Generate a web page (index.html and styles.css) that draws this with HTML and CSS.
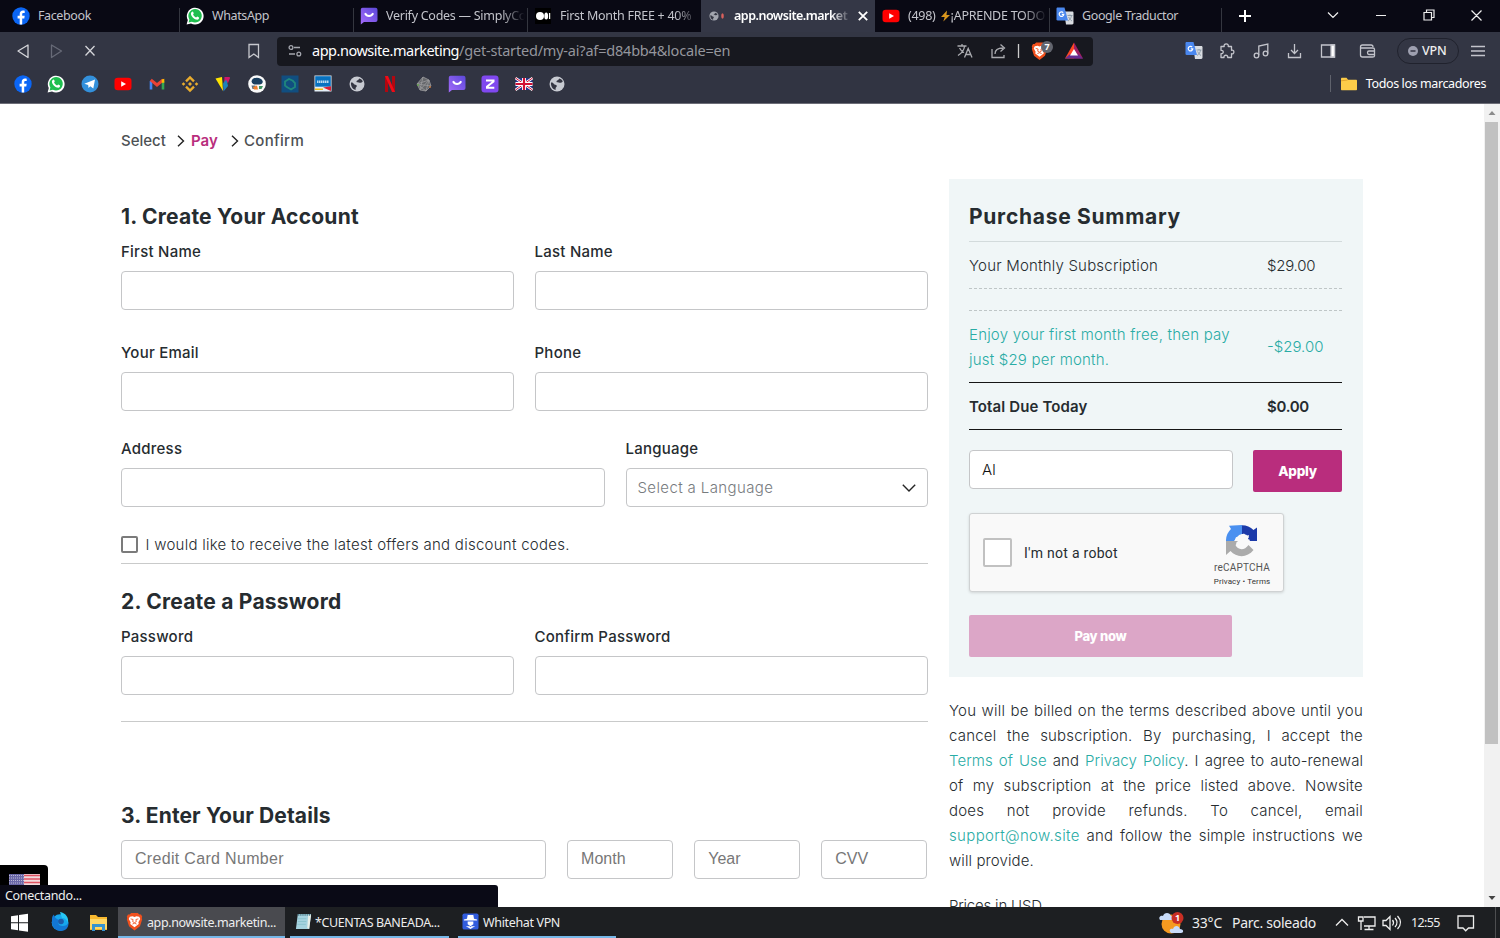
FILE: index.html
```
<!DOCTYPE html>
<html lang="en">
<head>
<meta charset="utf-8">
<title>Get started</title>
<link rel="stylesheet" href="styles.css">
</head>
<body>
<svg class="defs" width="0" height="0" aria-hidden="true">
  <symbol id="facebook" viewBox="0 0 18 18"><circle cx="9" cy="9" r="8.700" fill="#0b66f5"/><path d="M7.700 17.600V11.400H5.600V8.800h2.100V7c0-2.300 1.300-3.500 3.300-3.500.8 0 1.500.1 1.700.2v2.200h-1.300c-1 0-1.200.6-1.200 1.200v1.700h2.500l-.4 2.600h-2.100v6.200z" fill="#fff"/></symbol>
  <symbol id="whatsapp" viewBox="0 0 18 18"><path d="M.6 17.400l1.200-4.300A8.400 8.400 0 1 1 5 16.400z" fill="#fff"/><path d="M2.600 15.400l.8-3A6.700 6.700 0 1 1 5.900 14.700z" fill="#1fbe4f"/><path d="M6.200 4.700c.5-.3.9 0 1 .4l.5 1.200c.1.500-.5.900-.6 1.200.6 1.400 1.700 2.300 3 2.900.4 0 .8-1 1.200-.9l1.700.9c.3.900-.5 2.200-1.700 2.300-2.900 0-6.300-3.400-6.400-6 0-.8.600-1.700 1.300-2z" fill="#fff"/></symbol>
  <linearGradient id="violet" x1="1" x2="0" y1="0" y2="1"><stop stop-color="#5b48d8"/><stop offset="1" stop-color="#a56bfb"/></linearGradient>
  <symbol id="simply" viewBox="0 0 18 18"><path d="M2.500.8h13a2 2 0 0 1 2 2V13a2 2 0 0 1-2 2H4L.8 17.400V2.500A1.700 1.700 0 0 1 2.500.8z" fill="url(#violet)"/><path d="M5 6.200c2 3.700 6 3.700 8.200 0" fill="none" stroke="#fff" stroke-width="2"/></symbol>
  <symbol id="youtube" viewBox="0 0 18 18"><rect x=".5" y="2.800" width="17" height="12.400" rx="3.300" fill="#f00"/><path d="M7.200 6.200v5.600L12 9z" fill="#fff"/></symbol>
  <symbol id="gtranslate" viewBox="0 0 18 18"><path d="M8 4.500h8.200c.8 0 1.300.5 1.300 1.300V16c0 .9-.5 1.400-1.300 1.400H10z" fill="#d9dce1" stroke="none"/><path d="M11.500 8.500h5M14 7.500v1M12 14c2.200-1.300 3.200-3 3.500-5.500M12.700 10c.8 1.700 1.500 3 3.300 4" stroke="#8997a5" stroke-width=".9" fill="none"/><path d="M1.800.5h6.700L12 13.500H1.800A1.300 1.300 0 0 1 .5 12.200V1.800C.5 1 1 .5 1.800.5z" fill="#4a87ee" stroke="none"/><path d="M7.200 5.600a2.300 2.300 0 1 0 .6 1.700H5.800" stroke="#fff" fill="none" stroke-width="1.200"/></symbol>
  <symbol id="globe" viewBox="0 0 18 18"><circle cx="9" cy="9" r="7.500" fill="#c7cad1"/><path d="M3 7.600c2.800-.2 2.200 1.900 4.200 2.100 1.700.2 2.200 1.600.9 2.600-.9.700-.2 1.600-.6 2.700C4.500 14.300 2.600 11.200 3 7.600zM11.300 3.500c1.500.4 2.800 1.400 3.500 2.900-1 .7-1.800 1.700-3.200 1.300-1.200-.4-2.800.2-3.200-1 .1-1.500 2.400-1.300 2.900-3.200z" fill="#343642"/></symbol>
  <symbol id="brave" viewBox="0 0 18 20"><path d="M5.500 1h7l1.700 1.700 1.700-.1 1.300 2.300-.5 1.500.4 1.500-2.300 7.200L9 19.400l-5.800-4.300L.9 7.900l.4-1.500L.8 4.900l1.300-2.300 1.700.1z" fill="#f1501d" stroke="none"/><path d="M4 5l3-.5 2 .7 2-.7 3 .5 1.100 2.300-2 3.400.4 2L9 16.200l-4.500-3.500.4-2-2-3.400z" fill="#fff" stroke="none"/><path d="M4.900 7.200l2.600.7-.4 2.300 1.900 1 1.900-1-.4-2.300 2.600-.7M6.800 12.700L9 11.800l2.200.9" fill="none" stroke="#f1501d" stroke-width=".9"/></symbol>
</svg>

<div class="screen">
<header class="tabs">
  <div class="tab"><svg><use href="#facebook"/></svg><span>Facebook</span></div>
  <div class="tab"><svg><use href="#whatsapp"/></svg><span>WhatsApp</span></div>
  <div class="tab"><svg><use href="#simply"/></svg><span class="fade">Verify Codes — SimplyCo</span></div>
  <div class="tab"><svg viewBox="0 0 18 18"><path d="M1 1h16v16H1z" fill="#000"/><circle cx="6" cy="9" r="4" fill="#fff"/><ellipse cx="12.200" cy="9" rx="1.900" ry="3.600" fill="#fff"/><path d="M15.600 6v6" stroke="#fff" stroke-width="1.300"/></svg><span class="fade">First Month FREE + 40%</span></div>
  <div class="tab active"><svg viewBox="0 0 18 18"><use href="#globe" x="1.500" y="3.500" width="11" height="11" opacity=".75"/><ellipse cx="15.500" cy="9" rx="1.300" ry="2.700" fill="#d9605c"/></svg><span class="fade">app.nowsite.market</span><svg class="close" viewBox="0 0 10 10"><path d="M1.500 1.500l7 7m0-7l-7 7" stroke="#fff" stroke-width="1.500"/></svg></div>
  <div class="tab"><svg><use href="#youtube"/></svg><span class="fade">(498) <svg class="bolt" viewBox="0 0 10 14"><path d="M6.500 1.500L.5 8h3.700L2.800 12.500 9.500 6H6z" fill="#d9961d"/></svg>¡APRENDE TODO</span></div>
  <div class="tab"><svg><use href="#gtranslate"/></svg><span>Google Traductor</span></div>
  <div class="tab-end"></div>
  <svg class="window-controls" viewBox="0 0 278 32" fill="none" stroke="#eee" stroke-width="1.200"><path d="M23 10v12M17 16h12" stroke="#fff" stroke-width="2"/><path d="M106 12.500l5 5 5-5M154 15.500h10M202 12.500h7.500v7.500H202zM204.500 12V10h7.500v7.500h-2M249.500 10.500l10 10m0-10l-10 10"/></svg>
</header>

<div class="toolbar">
  <svg class="nav" viewBox="0 0 277 38" fill="none" stroke-width="1.300"><path d="M28 13v12.500L18 19z" stroke="#d5d6da" stroke-linejoin="round"/><path d="M51.500 13v12.500L61.500 19z" stroke="#676a77" stroke-linejoin="round"/><path d="M85.500 14l9 9.500m0-9.500l-9 9.500" stroke="#d5d6da"/><path d="M249 12.500h9.500V25.500l-4.700-3.500-4.800 3.500z" stroke="#c7c8ce"/></svg>
  <div class="url">
    <svg class="tune" viewBox="0 0 14 14" fill="none" stroke="#a5a7af" stroke-width="1.300"><circle cx="3" cy="3.500" r="1.900"/><path d="M6 3.500h6M1 10h6"/><circle cx="10.800" cy="10" r="1.900"/></svg>
    <span class="host">app.nowsite.marketing</span><span class="path">/get-started/my-ai?af=d84bb4&amp;locale=en</span>
    <svg class="url-icons" viewBox="0 0 140 30" fill="none" stroke="#aaabb0" stroke-width="1.300"><path d="M5.500 10h9M10 8v2M6 19.500c4-2.500 6-5 6.500-9M7.500 12c1 2 2.500 3.500 4.500 4.500M12.500 21.500l3.700-9 3.800 9M14 18.500h4.500M40 13v8.500h12V19M43 18c0-4 2-6 8-6M48.500 8.500l4 3.500-4 3.500"/><path d="M66.500 8v14" stroke="#ccc"/><use href="#brave" x="79" y="5.500" width="17" height="19"/><circle cx="95" cy="11" r="6" fill="#62656e" stroke="none"/><text x="92.600" y="14.300" class="tiny">7</text><path d="M122 6.500l-9 16h9z" fill="#ff4724" stroke="none"/><path d="M122 6.500l9 16h-9z" fill="#9e1f63" stroke="none"/><path d="M113 22.500h18l-4.500-4h-9z" fill="#662d91" stroke="none"/><path d="M122 13l-4 6.500h8z" fill="#fff" stroke="none"/></svg>
  </div>
  <svg class="tools" viewBox="0 0 316 38" fill="none" stroke="#c3c4cb" stroke-width="1.300"><use href="#gtranslate" x="1" y="9.500" width="18" height="18"/><path d="M37 14.500h3.200c-1-3.500 5-3.500 4 0h3.300v3.800c3.200-.8 3.200 4.200 0 3.400v3.800h-3.800c.5-3-4.200-3-3.700 0h-3v-3.800c3 .3 3-3.700 0-3.400z" stroke-linejoin="round"/><circle cx="72.500" cy="23.500" r="2.300"/><circle cx="81.500" cy="21.500" r="2.300"/><path d="M74.800 23V14l9-2v9.500M104.500 21v4.500h12V21M110.500 12v9M107 18l3.500 3.500L114 18M137.500 13h13v12h-13z"/><path d="M147 13h3.500v12H147z" fill="#fff"/><path d="M188.500 25h-10c-1 0-2-1-2-2v-8c0-1 1-2 2-2H187c1 0 2 1 2 2M177 16h12c1 0 1.500.5 1.500 1.500V24c0 1-1 1-2 1M190 19h-5c-2 0-2 3.500 0 3.500h5"/><rect x="213.500" y="6.500" width="61" height="25" rx="12.500" stroke="#20222d" stroke-width="1"/><circle cx="229" cy="19" r="5" fill="#9ea0b0" stroke="none"/><path d="M226.500 19h5" stroke="#333543" stroke-width="1.500"/><path d="M287 14.500h14M287 19h14M287 23.500h14" stroke-width="1.500"/><text x="238" y="23" class="vpn">VPN</text></svg>
</div>

<div class="bookmarks">
  <svg><use href="#facebook"/></svg><svg><use href="#whatsapp"/></svg>
  <svg viewBox="0 0 18 18"><circle cx="9" cy="9" r="8.500" fill="#3390db"/><path d="M3.300 8.800L14 4.500l-1.700 9-3-2.200-1.800 1.600-.3-2.800z" fill="#fff"/></svg>
  <svg><use href="#youtube"/></svg>
  <svg viewBox="0 0 18 18"><path d="M3 14.500V6" stroke="#4285f4" stroke-width="2.600"/><path d="M15 14.500V6" stroke="#34a853" stroke-width="2.600"/><path d="M2.800 4.800L9 10l6.200-5.200" fill="none" stroke="#e94235" stroke-width="3"/><path d="M13.700 6.300V4.500l2.600-.8v4h-2.600" fill="#fbbc04"/></svg>
  <svg viewBox="0 0 18 18" fill="none" stroke="#e9ac2e" stroke-width="2.300"><path d="M5 6.400l4-4 4 4M5 11.600l4 4 4-4"/><path d="M9 7l2 2-2 2-2-2zM.7 9L2.500 7.200 4.300 9l-1.800 1.800zM13.700 9l1.800-1.800L17.300 9l-1.800 1.800z" fill="#e9ac2e" stroke="none"/></svg>
  <svg viewBox="0 0 18 18"><path d="M1.500 3.500L8 2l1 14z" fill="#ffe500"/><path d="M10.500 2h5.500L9.500 16z" fill="#cc176b"/><path d="M12.500 4L14 11l-4.500 5.500-.5-8z" fill="#1d82b9"/><path d="M11 3h5l-2 5z" fill="#cc176b"/></svg>
  <svg viewBox="0 0 18 18"><circle cx="9" cy="9" r="8.800" fill="#f9f9f9"/><path d="M3.500 6.500c.5-5 10-5 11.300 0 0 2-2 3.500-4 3H8c-2 0-4-.5-4.500-3z" fill="#193e5f"/><path d="M3.500 10.500h4v3.500h-3z" fill="#5d7180"/><path d="M5 12l4-1.500 1 4H6z" fill="#f0802c"/><path d="M11 11h4l-1.500 3H11z" fill="#3d9560"/></svg>
  <svg viewBox="0 0 18 18"><path d="M.5.500h17v17H.5z" fill="#114e80"/><path d="M6.500 12.500L4 10.500V6.500l4-2.500 4.500 2M11.500 5.500L14 8v4l-4 2.500-5-3" fill="none" stroke="#21877c" stroke-width="1.800"/></svg>
  <svg viewBox="0 0 18 18"><path d="M.5.500h17v16H.5z" fill="#e4eff7"/><path d="M1.200 1.200h15.600v10.500H1.200z" fill="#0872c0"/><path d="M3 6.700h12" stroke="#b9d9ee" stroke-width="2.500" stroke-dasharray="1.500 .5"/><path d="M1 13.500h8v1.500H1z" fill="#f0bd19"/><path d="M9 12.500l8-1.200V16z" fill="#d82135"/></svg>
  <svg><use href="#globe"/></svg>
  <svg viewBox="0 0 18 18"><path d="M4 1h3v16H4zM11 1h3v16h-3z" fill="#b20710"/><path d="M4 1h3l7 16h-3z" fill="#ef0c18"/></svg>
  <svg viewBox="0 0 18 18" fill="#66686c" stroke="#9a9b9d" stroke-width=".8"><path d="M8 2l6 3 2 6-5 5-6-1-3-6z"/><path d="M2 9l14 2M8 2l-3 13M14 5L5 15M2 9l12-4-3 11z" fill="none"/><circle cx="3" cy="10" r="1" fill="#62a04d" stroke="none"/><circle cx="15" cy="12" r="1" fill="#be723e" stroke="none"/></svg>
  <svg><use href="#simply"/></svg>
  <svg viewBox="0 0 18 18"><rect x=".5" y=".5" width="17" height="17" rx="3" fill="#8048ef"/><path d="M5 5.500h7.500v1L5.500 12M5 12.700h8.300" fill="none" stroke="#fff" stroke-width="2"/></svg>
  <svg viewBox="0 0 18 18"><path d="M.5 3h17v12H.5z" fill="#26348b"/><path d="M.5 3l17 12M17.500 3L.5 15" stroke="#fff" stroke-width="2.500"/><path d="M.5 3l17 12M17.500 3L.5 15" stroke="#d21034"/><path d="M9 3v12M.5 9h17" stroke="#fff" stroke-width="4"/><path d="M9 3v12M.5 9h17" stroke="#d21034" stroke-width="2.200"/></svg>
  <svg><use href="#globe"/></svg>
  <div class="all-bookmarks"><svg viewBox="0 0 18 18"><path d="M1 4c0-1 .4-1.300 1-1.300h4.500l1.500 2h8c.6 0 1 .4 1 1v8.600c0 .6-.4 1-1 1H2c-.6 0-1-.4-1-1z" fill="#fccc49"/><path d="M1 5.800l6.500-.8" stroke="#e2a52b"/></svg><span>Todos los marcadores</span></div>
</div>

<div class="viewport">
  <main class="checkout">
    <nav class="steps"><span class="s1">Select</span><svg viewBox="0 0 8 12"><path d="M1 .8L6.500 6 1 11.200"/></svg><b>Pay</b><svg class="second" viewBox="0 0 8 12"><path d="M1 .8L6.500 6 1 11.200"/></svg><span class="s2">Confirm</span></nav>
    <div class="columns">
      <form class="form">
        <h2>1. Create Your Account</h2>
        <div class="pair first"><label>First Name<i class="field"></i></label><label>Last Name<i class="field"></i></label></div>
        <div class="pair second-row"><label>Your Email<i class="field"></i></label><label>Phone<i class="field"></i></label></div>
        <div class="pair address"><label>Address<i class="field"></i></label><label>Language<i class="field select"><span>Select a Language</span><svg viewBox="0 0 14 8"><path d="M.8.800L7 7 13.200.8"/></svg></i></label></div>
        <div class="offers"><i></i><span>I would like to receive the latest offers and discount codes.</span></div>
        <h2 class="h-password">2. Create a Password</h2>
        <div class="pair passwords"><label>Password<i class="field"></i></label><label>Confirm Password<i class="field"></i></label></div>
        <h2 class="h-details">3. Enter Your Details</h2>
        <div class="card-row"><i class="field"><span class="cc">Credit Card Number</span></i><i class="field">Month</i><i class="field">Year</i><i class="field">CVV</i></div>
      </form>
      <aside>
        <section class="summary">
          <h2>Purchase Summary</h2>
          <div class="line sub"><span>Your Monthly Subscription</span><em>$29.00</em></div>
          <div class="gap"></div>
          <div class="line promo"><span>Enjoy your first month free, then pay<br>just $29 per month.</span><em>-$29.00</em></div>
          <div class="line total"><span>Total Due Today</span><em>$0.00</em></div>
          <div class="coupon"><div class="field">AI</div><div class="apply">Apply</div></div>
          <div class="captcha"><i class="box"></i><span>I'm not a robot</span>
            <div class="brand"><svg viewBox="0 0 32 32"><path d="M16 0v9a7 7 0 0 0-5 3L8 16H0A16 16 0 0 1 5 4L3 .7z" fill="#4a90f0"/><path d="M16 .2A16 16 0 0 1 27.500 5L31 2.500V16H19l4-4a8 8 0 0 0-7-3z" fill="#1c3aa9"/><path d="M0 16h13l-3.500 4c2 5 9 6 13 0l5 5c-6 8-17 8-23 1L0 30z" fill="#ababab"/><path d="M15 10l3-1.500 2 2.500 3-1-1 4 2 1-2 4-4-2-2 4-4 1-2-4 2-2-3-1 1-3 4 1z" fill="#f9f9f9"/></svg><b>reCAPTCHA</b><small>Privacy&nbsp;•&nbsp;Terms</small></div>
          </div>
          <div class="pay">Pay now</div>
        </section>
        <div class="terms"><p>You will be billed on the terms described above until you</p><p>cancel the subscription. By purchasing, I accept the</p><p class="links"><a>Terms of Use</a> and <a>Privacy Policy</a>. I agree to auto-renewal</p><p>of my subscription at the price listed above. Nowsite</p><p>does not provide refunds. To cancel, email</p><p><a class="mail">support@now.site</a> and follow the simple instructions we</p><p class="last">will provide.</p><p class="last currency">Prices in USD</p></div>
      </aside>
    </div>
  </main>
  <div class="scrollbar"><svg viewBox="0 0 16 18"><path d="M4.500 11L8 7l3.500 4z" fill="#8b8b8b"/></svg><i></i><svg class="down" viewBox="0 0 16 18"><path d="M4.500 7L8 11l3.500-4z" fill="#444"/></svg></div>
  <div class="flag"><svg viewBox="0 0 31 12"><path d="M0 0h31v12H0z" fill="#f1dadd"/><path d="M0 1.500h31M0 5h31M0 8.500h31M0 12h31" stroke="#df5262" stroke-width="1.700"/><path d="M0 0h15v12H0z" fill="#6a68a8"/><path d="M0 1.500h15M0 4h15M0 6.500h15M0 9h15" stroke="#bbb8d5" stroke-dasharray="1 1"/></svg></div>
  <div class="status">Conectando...</div>
</div>

<footer class="taskbar">
  <svg class="launch" viewBox="0 0 118 31"><path d="M11 9.200l7-1v7h-7zM19 8l9-1.300v8.500h-9zM11 16.200h7v7l-7-1zM19 16.200h9v8.500l-9-1.300z" fill="#fff"/><circle cx="60" cy="15.500" r="8.300" fill="#16a7ee"/><path d="M52 13c-1 8 5 11 9 11 5 0 8-4 7.500-9-1 3-3 4-6 4-4 0-5-3-3.500-6-3-1-5-3-5-5.500C52 9 52 11 52 13z" fill="#1377d4"/><path d="M60 5c6 1 9 6 8 11-1-3-3-5-6-5z" fill="#27c6f5"/><circle cx="61" cy="14.500" r="2.800" fill="#1d5aaa"/><path d="M90 8h6l2 2h9v13H90z" fill="#f8b92f"/><path d="M90 12h17v10H90z" fill="#ffd867"/><path d="M92 17h13v7h-3v-4h-7v4h-3z" fill="#3794d1"/></svg>
  <div class="task current"><svg viewBox="0 0 18 20"><use href="#brave"/></svg><span>app.nowsite.marketin...</span></div>
  <div class="task notes"><svg viewBox="0 0 18 20"><path d="M3 2h14l-2 16H1z" fill="#a6d3df"/><path d="M14 3h3l-2 15-2-1z" fill="#e9efe8"/><path d="M3 3h13" stroke="#44727f" stroke-width="2" stroke-dasharray="1 1"/><path d="M3 7h9M3 10h9M2.500 13h9" stroke="#8bc3ce"/></svg><span>*CUENTAS BANEADA...</span></div>
  <div class="task white"><svg viewBox="0 0 18 20"><rect x=".5" y="1.500" width="17" height="17" rx="2" fill="#315cdd"/><path d="M6 3h6l.7 4 3.300 1v1H2V8l3.300-1zM6 10h6v3l-3 2-3-2zM4 15h4l1 1 1-1h4l-3 1.500-2 1.500-2-1.500z" fill="#fff"/></svg><span>Whitehat VPN</span></div>
  <div class="tray">
    <svg class="weather" viewBox="0 0 26 24"><circle cx="13" cy="13" r="9.500" fill="#f59a20"/><path d="M2 9c-2-3 1-5 3-4 1-4 7-4 8 0 3 0 3 4 0 4zM13 22c-3-3 0-5 2-4 1-4 6-4 7 0 4 0 4 4 1 4z" fill="#c9dcfa"/><circle cx="19.500" cy="7" r="6" fill="#c92f24"/><text x="17" y="10.300" class="tiny">1</text></svg>
    <span class="temp">33°C</span><span class="sky">Parc. soleado</span>
    <svg class="sys" viewBox="0 0 74 31" fill="none" stroke="#eee" stroke-width="1.300"><path d="M5 18.500l6-6 6 6M33 10h11v9H33M38 19v3.500M33.500 22.500h9M27.500 10h4.500v4h-4.500zM30 14v9M52 13.500h3l4-4v13l-4-4h-3zM61.500 13q2 2.500 0 5.500M64 11q4 4.500 0 9M66.500 9q6 6.500 0 13"/></svg>
    <span class="clock">12:55</span>
    <svg class="notif" viewBox="0 0 18 18" fill="none" stroke="#eee" stroke-width="1.300"><path d="M1 2h15.500v12H11.500L8.700 16.800 6 14H1z"/></svg>
  </div>
</footer>
</div>
</body>
</html>
```
FILE: styles.css
```
*{box-sizing:border-box}
body{margin:0;overflow:hidden;background:#fff;font-family:Inter,sans-serif;color:#262c30}
i,em{font-style:normal}
svg{display:block;flex:none}
.defs{position:absolute}
.screen{width:1500px;height:938px;display:flex;flex-direction:column}
.tabs,.toolbar,.bookmarks,.status,.taskbar{font-family:"Noto Sans",sans-serif;font-size:12.500px;letter-spacing:-.39px;white-space:pre}

.tabs{height:32px;flex:none;background:#090914;display:flex;padding-left:5px;color:#c3c4cb}
.tab{width:174px;display:flex;align-items:center;gap:8px;padding:0 0 1px 7px;background:linear-gradient(#34363f,#34363f) 0 100%/1px 24px no-repeat}
.tab:first-child,.tab.active,.tab.active + .tab{background-image:none}
.tab > svg{width:18px;height:18px}
.tab .fade{width:139px;display:flex;letter-spacing:-.27px;-webkit-mask-image:linear-gradient(90deg,#000 83%,transparent);mask-image:linear-gradient(90deg,#000 83%,transparent)}
.tab.active{margin-left:-4px;width:178px;padding-left:10px;background:linear-gradient(#343746,#343746) 4px 0/174px 32px no-repeat;color:#fff}
.tab.active .fade{width:117px;font-weight:600;letter-spacing:-.5px;margin-left:1px}
.tab .close{width:12px;height:12px;margin-left:-2px}
.bolt{width:11px;height:14px;margin:2px 0 0 1px}
.tab-end{width:1px;height:24px;margin:8px 0 0 -2px;background:#34363f}
.window-controls{width:278px;height:32px}

.toolbar{height:38px;flex:none;display:flex;align-items:center;background:#333644}
.nav{width:277px;height:38px}
.url{width:816px;height:29px;background:#17181f;border-radius:4px;display:flex;align-items:center;padding-left:11px;font-size:14.500px}
.tune{width:14px;height:14px;margin-right:10px}
.host,.path{padding-bottom:2px}
.host{width:147px;color:#fff;letter-spacing:-.48px}
.path{width:271px;color:#95969d;letter-spacing:-.2px;margin-right:222px}
.url-icons{width:140px;height:30px}
.tools{width:316px;height:38px;margin-left:91px}
.tiny{font:700 9px "Noto Sans",sans-serif;fill:#fff;stroke:none}
.vpn{font:500 12.500px "Noto Sans",sans-serif;letter-spacing:-.2px;fill:#eee;stroke:none}

.bookmarks{height:34px;flex:none;display:flex;align-items:center;gap:15.380px;padding:0 14px 6px;background:#313442;border-bottom:1px solid #6c6d77}
.bookmarks svg{width:18px;height:18px}
.all-bookmarks{margin-left:auto;height:17px;border-left:1px solid #5f626c;padding-left:9px;display:flex;align-items:center;gap:8px;color:#fff}

.viewport{height:803px;flex:none;position:relative;display:flex;overflow:hidden}
.checkout{flex:1;padding:24px 0 0 121px}
.steps{height:25px;display:flex;align-items:center;font-size:15px;font-weight:500;color:#4d5154}
.steps svg{width:8px;height:12px;margin:0 6px 0 11px;fill:none;stroke:#222;stroke-width:1.400}
.steps .second{margin:0 5px 0 12px}
.steps b{font-weight:600;color:#b92d7d;width:28px}
.steps .s1{width:45px}
.steps .s2{letter-spacing:.3px}
.columns{display:flex;gap:21.500px;padding-top:26px}
.form{width:806.500px;padding-top:23px}
h2{margin:0;height:30px;line-height:30px;font-size:21px;font-weight:700;letter-spacing:.22px;white-space:nowrap}
.field{display:flex;align-items:center;height:39px;border:1px solid #c5c6c8;border-radius:4px;background:#fff;padding:0 13px 1px}
.pair{display:grid;grid-template-columns:393px 393px;gap:20.500px}
.pair label{font-size:15px;font-weight:500;line-height:25px;letter-spacing:.24px}
.pair .field{margin-top:7px}
.first{margin-top:7px}
.second-row{margin-top:30px}
.address{margin-top:25px;grid-template-columns:484px 302px}
.select{justify-content:space-between;font-weight:300;color:#777b7e;letter-spacing:.38px;padding:0 11px}
.select svg{width:14px;height:8px;fill:none;stroke:#252525;stroke-width:1.400}
.offers{height:57px;padding-top:25px;display:flex;gap:7.500px;border-bottom:1px solid #c9caca;font-size:15px;font-weight:300;line-height:25px;letter-spacing:.265px}
.offers i{width:17px;height:17px;border:2px solid #7b7b7b;border-radius:2px;margin-top:4px}
.h-password{margin-top:23px}
.passwords{margin-top:7px;padding-bottom:26px;border-bottom:1px solid #c9caca}
.h-details{margin-top:79px;letter-spacing:.12px}
.card-row{display:grid;grid-template-columns:425px 106px 106px 106px;gap:21.100px;margin-top:9px;font:16px "Liberation Sans",sans-serif;color:#777}
.cc{letter-spacing:.32px}

aside{width:414px}
.summary{height:498px;background:#f0f6f7;padding:23px 21px 0 20px}
.summary h2{height:40px;border-bottom:1px solid #d3dbdc;letter-spacing:.72px}
.line{display:grid;grid-template-columns:298px 1fr;align-items:center;font-size:15px;line-height:25px;font-weight:300;letter-spacing:.2px;white-space:nowrap}
.line em{letter-spacing:-.25px}
.sub{height:46px}
.gap{height:23px;border:dashed #bfc6c7;border-width:1px 0}
.promo{height:72px;color:#29aca5;border-bottom:1px solid #151515}
.promo em{letter-spacing:0}
.total{height:47px;font-weight:600;letter-spacing:.12px;border-bottom:1px solid #151515}
.total em{letter-spacing:-.3px}
.coupon{display:flex;justify-content:space-between;margin-top:20px}
.coupon .field{width:264px;font-size:15px;font-weight:300;color:#111;padding:0 12px 1px}
.apply,.pay{height:42px;width:89px;background:#b92d7d;border-radius:2px;color:#fff;font-size:13.500px;font-weight:800;letter-spacing:-.25px;display:flex;align-items:center;justify-content:center}
.captcha{width:315px;height:79px;margin-top:21px;padding-left:13px;border:1px solid #cfd2d3;border-radius:3px;background:#f9f9f9;box-shadow:0 1px 3px #0002;display:flex;align-items:center;font:14px Roboto,sans-serif;letter-spacing:.28px}
.box{width:29px;height:29px;border:2px solid #c1c1c1;border-radius:2px;background:#fff;margin-right:12px}
.brand{margin:0 11px 0 auto;width:60px;display:flex;flex-direction:column;align-items:center;color:#555;white-space:nowrap}
.brand svg{width:32px;height:32px;margin-top:7px}
.brand b{font-size:10px;font-weight:400;line-height:12px;margin-top:5px;letter-spacing:.2px}
.brand small{font-size:8px;line-height:11px;margin-top:2px;letter-spacing:.1px;color:#333}
.pay{width:263px;margin-top:23px;background:#dca6c7;font-size:13px}
.terms{padding-top:21px;font-size:15px;font-weight:300;line-height:25px}
.terms p{margin:0;height:25px;text-align-last:justify;white-space:nowrap;letter-spacing:.2px}
.terms .links{letter-spacing:.05px}
.terms .mail{letter-spacing:.34px}
.terms p.last{text-align-last:left;letter-spacing:.1px}
.terms p.currency{margin-top:20px;letter-spacing:-.2px}
.terms a{color:#29aca5}

.scrollbar{width:16px;background:#f1f1f1;display:flex;flex-direction:column}
.scrollbar svg{width:16px;height:18px}
.scrollbar i{width:13px;height:622px;margin-left:1px;background:#c1c1c1}
.scrollbar .down{margin-top:auto}
.flag{position:absolute;left:0;bottom:0;width:48px;height:42px;background:#000;border-radius:0 4px 0 0;padding:9px}
.flag svg{width:31px;height:12px}
.status{position:absolute;left:0;bottom:0;width:498px;height:22px;line-height:22px;background:#0a0a16;color:#eee;padding-left:5px;border-radius:0 3px 0 0;letter-spacing:-.3px}

.taskbar{height:31px;flex:none;background:#1d1f22;display:flex;color:#eee}
.launch{width:118px;height:31px}
.task{height:31px;border-bottom:2px solid #76b7e8;display:flex;align-items:center;gap:4px;padding-top:2px}
.task svg{width:17px;height:19px;margin-bottom:2px}
.current{width:167px;background:#494a4f;padding-left:8px}
.notes{width:159px;margin-left:5px;padding-left:5px;gap:3px}
.white{width:158px;margin-left:9px;padding-left:4px;letter-spacing:-.35px}
.tray{margin-left:auto;display:flex;align-items:center;width:341px}
.weather{width:26px;height:24px;margin-left:-1px}
.temp{font-size:14px;width:31px;margin-left:8px;letter-spacing:-.2px}
.sky{font-size:14px;width:84px;margin-left:9px;letter-spacing:-.27px}
.sys{width:74px;height:31px;margin-left:15px}
.clock{width:28px;margin-left:6px;letter-spacing:-.65px}
.notif{width:18px;height:18px;margin-left:18px}
.tray::after{content:"";width:1px;height:31px;margin-left:20px;background:#4d4e50}
```
